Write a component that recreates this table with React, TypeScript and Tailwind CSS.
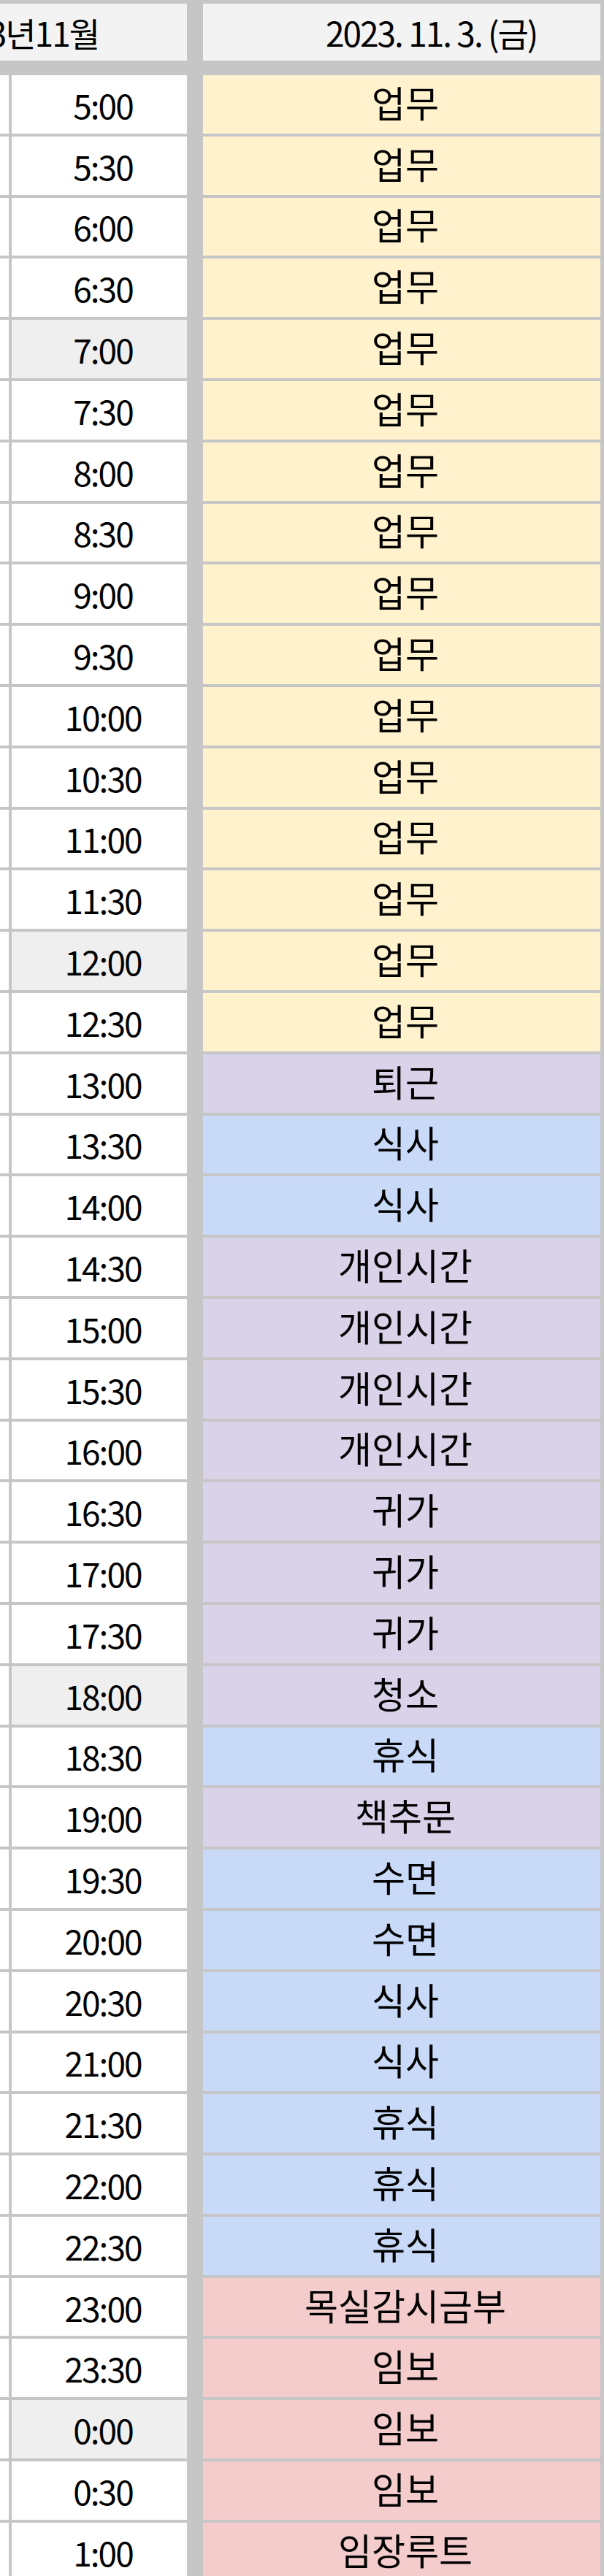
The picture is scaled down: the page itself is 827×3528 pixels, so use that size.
const PURPLE = 'bg-[#d9d2e9]';
const BLUE = 'bg-[#c9daf8]';
const YELLOW = 'bg-[#fff2cc]';
const PINK = 'bg-[#f4cccc]';

type Slot = { time: string; task: string; color: string; mark?: boolean };

const WORK_TIMES = [
  '5:00', '5:30', '6:00', '6:30', '7:00', '7:30', '8:00', '8:30',
  '9:00', '9:30', '10:00', '10:30', '11:00', '11:30', '12:00', '12:30',
];

const REST: [string, string, string][] = [
  ['13:00', '퇴근', PURPLE],
  ['13:30', '식사', BLUE],
  ['14:00', '식사', BLUE],
  ['14:30', '개인시간', PURPLE],
  ['15:00', '개인시간', PURPLE],
  ['15:30', '개인시간', PURPLE],
  ['16:00', '개인시간', PURPLE],
  ['16:30', '귀가', PURPLE],
  ['17:00', '귀가', PURPLE],
  ['17:30', '귀가', PURPLE],
  ['18:00', '청소', PURPLE],
  ['18:30', '휴식', BLUE],
  ['19:00', '책추문', PURPLE],
  ['19:30', '수면', BLUE],
  ['20:00', '수면', BLUE],
  ['20:30', '식사', BLUE],
  ['21:00', '식사', BLUE],
  ['21:30', '휴식', BLUE],
  ['22:00', '휴식', BLUE],
  ['22:30', '휴식', BLUE],
  ['23:00', '목실감시금부', PINK],
  ['23:30', '임보', PINK],
  ['0:00', '임보', PINK],
  ['0:30', '임보', PINK],
  ['1:00', '임장루트', PINK],
];

// 정각 중 7, 12, 18, 0시는 회색 칸
const MARKED = ['7:00', '12:00', '18:00', '0:00'];

const SLOTS: Slot[] = [
  ...WORK_TIMES.map((t) => ({ time: t, task: '업무', color: YELLOW })),
  ...REST.map(([time, task, color]) => ({ time, task, color })),
].map((s) => ({ ...s, mark: MARKED.includes(s.time) }));

export default function App() {
  return (
    <div className="w-[827px] h-[3528px] overflow-hidden bg-[#c6c6c6] pt-[5px] pr-[5px] font-['Noto_Sans_CJK_KR','Noto_Sans',sans-serif] text-black">
      <div className="flex h-[78px]">
        <div className="w-[256px] bg-[#f3f3f3] overflow-hidden flex items-center justify-end pr-[121px]">
          <span className="whitespace-nowrap text-[46px] tracking-[-2px] leading-none">2023년11월</span>
        </div>
        <div className="flex-1 ml-[22px] bg-[#f3f3f3] flex items-center pl-[168px]">
          <span className="whitespace-nowrap text-[46px] tracking-[-2px] leading-none">2023. 11. 3. (금)</span>
        </div>
      </div>

      <div className="mt-[20px] flex flex-col gap-[4px]">
        {SLOTS.map((s) => (
          <div key={s.time} className="flex h-[79.8px] shrink-0">
            <div className="w-[12px] bg-white" />
            <div
              className={`w-[240px] ml-[4px] flex items-center justify-center text-[46px] tracking-[-2px] leading-none ${
                s.mark ? 'bg-[#efefef]' : 'bg-white'
              }`}
            >
              <span className="pl-[10px]">{s.time}</span>
            </div>
            <div className={`flex-1 ml-[22px] flex items-center justify-center text-[50px] leading-none ${s.color}`}>
              <span className="pl-[10px] pb-[8px]">{s.task}</span>
            </div>
          </div>
        ))}
      </div>
    </div>
  );
}
